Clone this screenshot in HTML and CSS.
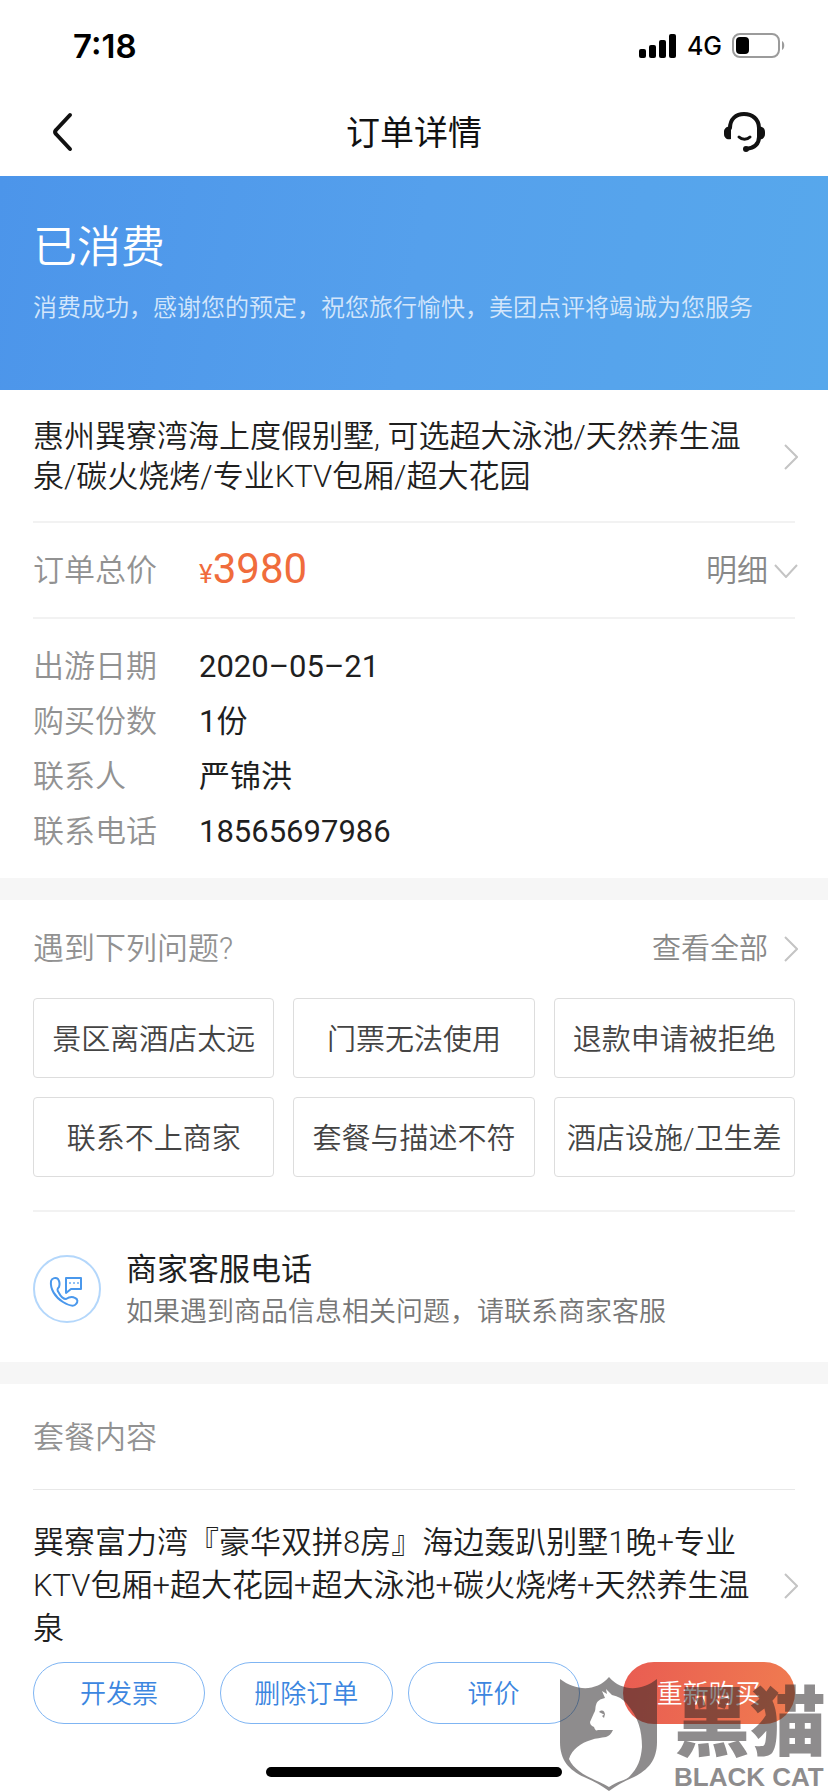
FILE: index.html
```html
<!DOCTYPE html>
<html lang="zh-CN">
<head>
    <meta charset="UTF-8">
    <meta name="viewport" content="width=device-width, initial-scale=1.0">
    <title>订单详情</title>
    <link rel="stylesheet" href="styles.css">
</head>
<body>
    <div class="status-bar">
        <span class="time">7:18</span>
        <div class="status-icons">
            <svg width="38" height="24" viewBox="0 0 38 24">
                <rect x="0" y="15" width="7" height="9" rx="2"/>
                <rect x="10" y="11" width="7" height="13" rx="2"/>
                <rect x="20" y="6" width="7" height="18" rx="2"/>
                <rect x="30" y="0" width="7" height="24" rx="2"/>
            </svg>
            <span class="network">4G</span>
            <svg width="54" height="26" viewBox="0 0 54 26">
                <rect x="1" y="1" width="46" height="23" rx="7" fill="none" stroke="#9b9b9b" stroke-width="2"/>
                <rect x="4" y="4" width="13" height="17" rx="4"/>
                <path d="M50 8c3 1 3 8 0 9z" fill="#9b9b9b"/>
            </svg>
        </div>
    </div>

    <header class="nav">
        <button class="icon-btn back" type="button" aria-label="返回">
            <svg width="24" height="40" viewBox="0 0 24 40" fill="none" stroke="#111" stroke-width="4" stroke-linecap="round" stroke-linejoin="round">
                <path d="M18 3L4 18q-2 2 0 4l14 15"/>
            </svg>
        </button>
        <h1>订单详情</h1>
        <button class="icon-btn" type="button" aria-label="客服">
            <svg width="42" height="40" viewBox="0 0 42 40" fill="none" stroke="#111" stroke-width="3" stroke-linecap="round">
                <path d="M6 16C6 7 12 2 20 2s15 5 15 14v9c0 7-5 11-13 12" stroke-width="4"/>
                <path d="M15 25c3 3 8 3 11 0"/>
                <path d="M7 15c-4-1-7 1-7 5v2c0 4 3 6 7 5zM34 15v12c4 1 7-1 7-5v-2c0-4-3-6-7-5z" fill="#111" stroke="none"/>
                <circle cx="22" cy="37" r="3" fill="#111" stroke="none"/>
            </svg>
        </button>
    </header>

    <section class="banner">
        <h2>已消费</h2>
        <p>消费成功，感谢您的预定，祝您旅行愉快，美团点评将竭诚为您服务</p>
    </section>

    <section class="card">
        <a class="product" href="#">
            <span>惠州巽寮湾海上度假别墅, 可选超大泳池/天然养生温泉/碳火烧烤/专业KTV包厢/超大花园</span>
            <svg class="arrow" width="14" height="26" viewBox="0 0 14 26"><path d="M1 1l12 12L1 25"/></svg>
        </a>
        <div class="total">
            <span class="label">订单总价</span>
            <span class="price"><small>¥</small>3980</span>
            <button class="detail" type="button">明细
                <svg class="arrow" width="24" height="14" viewBox="0 0 24 14"><path d="M1 1l11 12L23 1"/></svg>
            </button>
        </div>
        <dl class="info">
            <dt>出游日期</dt><dd>2020–05–21</dd>
            <dt>购买份数</dt><dd>1份</dd>
            <dt>联系人</dt><dd>严锦洪</dd>
            <dt>联系电话</dt><dd>18565697986</dd>
        </dl>
    </section>

    <section class="card">
        <div class="help-head">
            <h3>遇到下列问题?</h3>
            <a href="#">查看全部
                <svg class="arrow" width="14" height="26" viewBox="0 0 14 26"><path d="M1 1l12 12L1 25"/></svg>
            </a>
        </div>
        <div class="questions">
            <button type="button">景区离酒店太远</button>
            <button type="button">门票无法使用</button>
            <button type="button">退款申请被拒绝</button>
            <button type="button">联系不上商家</button>
            <button type="button">套餐与描述不符</button>
            <button type="button">酒店设施/卫生差</button>
        </div>
        <a class="service" href="#">
            <svg width="68" height="68" viewBox="0 0 68 68" fill="none" stroke="#4a98ec" stroke-width="2" stroke-linejoin="round">
                <circle cx="34" cy="34" r="33" stroke="#b4d7fb"/>
                <path d="M18 26c1-3 5-4 7-2 2 3 2 5 1 8-2 2-2 3 0 6 2 4 5 6 7 6 3-2 6-3 9-1 3 1 3 4 1 6-2 3-8 1-13-2-8-5-13-13-12-21z"/>
                <path d="M33 23h15v11H38l-5 4z"/>
                <path d="M36 28h2M40 28h2M44 28h2" stroke="#8fc1f6"/>
            </svg>
            <span class="service-text">
                <strong>商家客服电话</strong>
                <span>如果遇到商品信息相关问题，请联系商家客服</span>
            </span>
        </a>
    </section>

    <section class="card">
        <h3 class="package-title">套餐内容</h3>
        <a class="package" href="#">
            <span>巽寮富力湾『豪华双拼8房』海边轰趴别墅1晚+专业KTV包厢+超大花园+超大泳池+碳火烧烤+天然养生温泉</span>
            <svg class="arrow" width="14" height="26" viewBox="0 0 14 26"><path d="M1 1l12 12L1 25"/></svg>
        </a>
    </section>

    <footer class="actions">
        <button type="button">开发票</button>
        <button type="button">删除订单</button>
        <button type="button">评价</button>
        <button type="button" class="primary">重新购买</button>
        <div class="watermark">
            <svg width="98" height="116" viewBox="0 0 98 116">
                <path fill-rule="evenodd" d="M0 2c16 12 36 13 49-2 13 15 33 14 48 2v63c0 18-9 28-23 35-9 4-17 8-25 14-8-6-16-10-25-14C9 93 0 83 0 65zM42 14l3 7c-5 1-8 3-9 7-1 3 0 5-2 8l-4 9c0 3 2 4 4 5 1 3 2 4 4 3h15c-2 4-4 6-7 7-5 1-10 1-15 3-10 3-19 9-22 19 2 5 6 9 10 12 9 7 20 10 30 16 9-6 15-6 20-10 9-9 12-18 13-30 0-17-4-30-15-43-4-5-9-8-15-9l-6-6 1 5z"/>
                <path d="M39 35l6 3c0-4-3-6-6-3zm3 4l2 2 1-4z"/>
            </svg>
            <div class="watermark-text">
                <span>黑猫</span>
                <b>BLACK CAT</b>
            </div>
        </div>
    </footer>
    <div class="home-indicator"></div>
</body>
</html>
```
FILE: styles.css
```css
* { box-sizing: border-box; }
body {
    margin: 0;
    background: #fff;
    color: #1f1f1f;
    font-family: Roboto, "Noto Sans CJK SC", sans-serif;
    font-size: 31px;
    font-weight: 350;
    line-height: 40px;
}
h1, h2, h3, p, dl, dd { margin: 0; font-weight: inherit; font-size: inherit; }
a { color: inherit; text-decoration: none; }
button {
    padding: 0;
    border: none;
    background: none;
    color: inherit;
    font: inherit;
    cursor: pointer;
}
svg { flex: none; display: block; }
.arrow { fill: none; stroke: #c4c4c4; stroke-width: 2; }

.status-bar {
    display: flex;
    justify-content: space-between;
    align-items: center;
    height: 92px;
    padding: 0 42px 0 73px;
    color: #000;
    font-family: Inter, sans-serif;
}
.time { font-size: 33px; font-weight: 600; }
.status-icons { display: flex; align-items: center; gap: 10px; }
.network { font-size: 25px; font-weight: 500; }

.nav {
    display: flex;
    align-items: center;
    height: 84px;
    padding: 0 62px 4px 52px;
}
.nav h1 {
    flex: 1;
    padding-top: 2px;
    color: #111;
    font-size: 34px;
    font-weight: 400;
    text-align: center;
}
.icon-btn { display: flex; width: 42px; }
.icon-btn.back { width: 52px; }

.banner {
    padding: 40px 33px 62px;
    background: linear-gradient(100deg, #4c95ea, #55a0ec 50%, #57a8ec);
    color: #fff;
}
.banner h2 { font-size: 44px; line-height: 64px; }
.banner p { margin-top: 8px; color: #d3e6fb; font-size: 24px; }

.card { padding: 0 33px; }
.card + .card { border-top: 22px solid #f6f6f6; }
.product, .total, .package {
    display: flex;
    align-items: center;
    justify-content: space-between;
}
.product {
    margin-right: -3px;
    padding: 27px 0 24px;
}
.product span, .package span { flex: 1; padding-right: 24px; }
.total {
    height: 98px;
    padding-top: 2px;
    border-top: 2px solid #f2f2f2;
    border-bottom: 2px solid #f2f2f2;
}
.label, dt { width: 166px; color: #929292; }
.price { flex: 1; color: #f06c3c; font-size: 42px; font-weight: 400; }
.price small { font-size: 26px; }
.detail {
    display: flex;
    align-items: center;
    gap: 6px;
    margin-right: -3px;
    color: #888;
}
.info {
    display: grid;
    grid-template-columns: 166px 1fr;
    row-gap: 15px;
    padding: 28px 0 26px;
}
.info dd { font-weight: 400; }

.help-head {
    display: flex;
    justify-content: space-between;
    padding: 29px 0;
    color: #929292;
}
.help-head a {
    display: flex;
    align-items: center;
    gap: 16px;
    margin-right: -3px;
    color: #888;
    font-size: 29px;
}
.questions {
    display: grid;
    grid-template-columns: repeat(3, 1fr);
    gap: 19px;
    padding-bottom: 33px;
}
.questions button {
    height: 80px;
    padding-top: 4px;
    border: 1px solid #ddd;
    border-radius: 4px;
    color: #444;
    font-size: 29px;
    white-space: nowrap;
}
.service {
    display: flex;
    align-items: center;
    gap: 25px;
    padding: 34px 0 30px;
    border-top: 2px solid #f2f2f2;
}
.service-text {
    display: flex;
    flex-direction: column;
    gap: 2px;
    padding-top: 4px;
}
.service-text strong { font-weight: 400; }
.service-text span { color: #777; font-size: 27px; }

.package-title {
    padding: 34px 0 31px;
    border-bottom: 1px solid #e8e8e8;
    color: #929292;
}
.package {
    margin-right: -3px;
    padding: 31px 0 12px;
    line-height: 43px;
}

.actions {
    position: relative;
    display: grid;
    grid-template-columns: repeat(3, 1fr) 13px 1fr;
    column-gap: 15px;
    padding: 0 33px;
}
.actions button {
    height: 62px;
    padding-top: 2px;
    border: 1px solid #7fb5f3;
    border-radius: 31px;
    color: #3c86e0;
    font-size: 26px;
}
.actions .primary {
    grid-column: 5;
    border: none;
    background: linear-gradient(100deg, #e95c52, #f07c50);
    color: #fff;
}
.home-indicator {
    width: 296px;
    height: 10px;
    margin: 43px auto 16px;
    border-radius: 5px;
    background: #000;
}

/* photo stamp laid over the footer */
.watermark {
    position: absolute;
    top: 15px;
    right: 2px;
    display: flex;
    gap: 16px;
    opacity: 0.52;
    color: #292526;
    fill: #292526;
    pointer-events: none;
}
.watermark-text { padding-top: 11px; }
.watermark-text span {
    display: block;
    font-size: 76px;
    font-weight: 900;
    line-height: 72px;
}
.watermark-text b {
    display: block;
    font-family: "Liberation Sans", sans-serif;
    font-size: 26px;
    font-weight: 700;
    line-height: 34px;
    white-space: nowrap;
}
```
